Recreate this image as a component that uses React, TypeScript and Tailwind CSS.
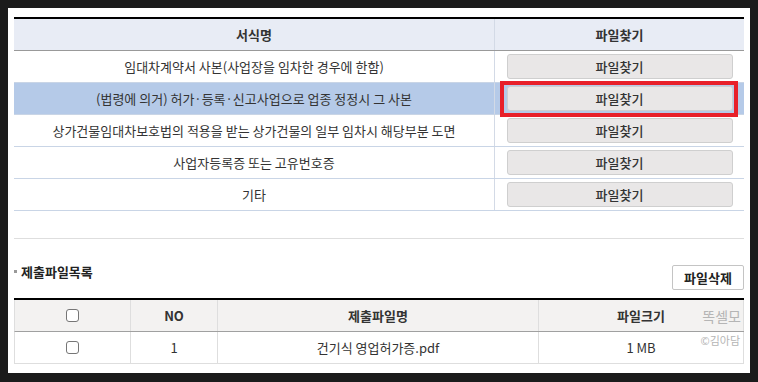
const FONT = "font-['Noto_Sans_CJK_KR','Noto_Sans',sans-serif]";

const forms = [
  "임대차계약서 사본(사업장을 임차한 경우에 한함)",
  "(법령에 의거) 허가·등록·신고사업으로 업종 정정시 그 사본",
  "상가건물임대차보호법의 적용을 받는 상가건물의 일부 임차시 해당부분 도면",
  "사업자등록증 또는 고유번호증",
  "기타",
];

const SELECTED = 1;

function FindButton({ marked }: { marked?: boolean }) {
  return (
    <div className="relative flex w-full justify-center">
      <button
        type="button"
        className="h-[25px] w-[226px] rounded-[3px] border border-[#cfcfcf] bg-[#e9e7e7] text-[13px] font-medium text-[#333]"
      >
        파일찾기
      </button>
      {marked && (
        <div className="pointer-events-none absolute left-[-6px] right-[-5px] top-[-5px] bottom-[-6px] border-[4px] border-[#e8202a]" />
      )}
    </div>
  );
}

function Checkbox() {
  return <span className="inline-block h-[13px] w-[13px] rounded-[3px] border border-[#767676] bg-white" />;
}

export default function App() {
  return (
    <div className={`h-[382px] w-[758px] bg-[#1b1b1b] p-[8px] ${FONT}`}>
      <div className="h-[365px] bg-white px-[6px] pt-[9px]">
        {/* 서식 목록 */}
        <div className="border-t-2 border-black">
          <div className="flex h-[32px] border-b border-[#999] bg-[#e8ecf5] text-[13px] font-bold text-[#333]">
            <div className="flex w-[481px] items-center justify-center border-r border-[#d3dae6]">서식명</div>
            <div className="flex flex-1 items-center justify-center">파일찾기</div>
          </div>
          {forms.map((f, i) => (
            <div
              key={f}
              className={`flex h-[32px] border-b border-[#c9d5e6] text-[13px] text-[#333] ${i === SELECTED ? "bg-[#b5cae8]" : "bg-white"}`}
            >
              <div className="flex w-[481px] items-center justify-center border-r border-[#d3dae6]">{f}</div>
              <div className="flex flex-1 items-center px-[11px]">
                <FindButton marked={i === SELECTED} />
              </div>
            </div>
          ))}
          <div className="h-[28px] border-b border-[#dedede]" />
        </div>

        {/* 제출파일목록 */}
        <div className="mt-[26px] flex h-[25px] items-start justify-between">
          <div className="flex items-center gap-[4px] leading-[13px]">
            <span className="h-[3px] w-[3px] bg-[#999]" />
            <span className="text-[13px] font-bold text-[#222]">제출파일목록</span>
          </div>
          <button
            type="button"
            className="h-[25px] w-[72px] rounded-[2px] border border-[#c4c4c4] bg-white text-[13px] font-bold text-[#222]"
          >
            파일삭제
          </button>
        </div>

        <div className="mt-[8px] border-t-2 border-black text-[13px]">
          <div className="flex h-[32px] border-b border-l border-[#a0a0a0] border-l-[#dedede] bg-[#f3f2f1] font-bold text-[#333]">
            <div className="flex w-[116px] items-center justify-center border-r border-[#dedede]">
              <Checkbox />
            </div>
            <div className="flex w-[87px] items-center justify-center border-r border-[#dedede]">NO</div>
            <div className="flex w-[321px] items-center justify-center border-r border-[#dedede]">제출파일명</div>
            <div className="relative flex flex-1 items-center justify-center border-r border-[#dedede]">
              파일크기
              <span className="absolute right-[2px] top-[6px] text-[14px] font-normal text-[#b5b5b5]">똑셀모</span>
            </div>
          </div>
          <div className="flex h-[32px] border-b border-l border-[#dedede] text-[#333]">
            <div className="flex w-[116px] items-center justify-center border-r border-[#dedede]">
              <Checkbox />
            </div>
            <div className="flex w-[87px] items-center justify-center border-r border-[#dedede]">1</div>
            <div className="flex w-[321px] items-center justify-center border-r border-[#dedede]">건기식 영업허가증.pdf</div>
            <div className="relative flex flex-1 items-center justify-center border-r border-[#dedede]">
              1 MB
              <span className="absolute right-[3px] top-[0px] text-[11px] text-[#b5b5b5]">©김아담</span>
            </div>
          </div>
        </div>
      </div>
    </div>
  );
}
